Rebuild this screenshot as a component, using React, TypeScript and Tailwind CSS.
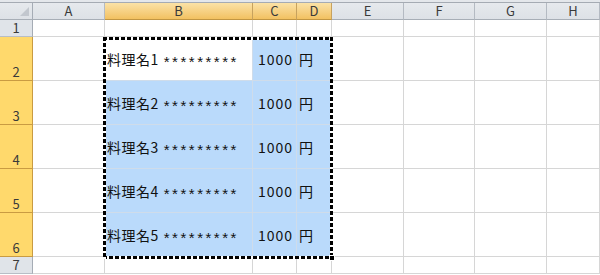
import React from 'react';

const COLS = ['A', 'B', 'C', 'D', 'E', 'F', 'G', 'H'];
const SEL_COLS = ['B', 'C', 'D'];
const ROWS = [1, 2, 3, 4, 5, 6, 7];
const SEL_ROWS = [2, 3, 4, 5, 6];

const FONT = "font-['Noto_Sans_CJK_JP','Noto_Sans',sans-serif]";

function ColHeader({ label }: { label: string }) {
  const sel = SEL_COLS.includes(label);
  return (
    <div
      className={
        'flex items-center justify-center text-[13px] text-[#3a3a3a] border-r border-b ' +
        (sel
          ? 'bg-linear-to-b from-[#fbe2a6] to-[#f2c160] border-r-[#c7a25e] border-b-[#c29642]'
          : 'bg-linear-to-b from-[#e6e9ed] to-[#dde1e6] border-r-[#b4bac2] border-b-[#a7aeb6]')
      }
    >
      {label}
    </div>
  );
}

function RowHeader({ n }: { n: number }) {
  const sel = SEL_ROWS.includes(n);
  return (
    <div
      className={
        'flex items-end justify-center text-[13px] leading-[13px] pb-[2px] text-[#3a3a3a] border-r border-b ' +
        (sel
          ? 'bg-[#ffd96c] border-r-[#c99b42] border-b-[#c99b42]'
          : 'bg-[#e0e4e9] border-r-[#a5acb5] border-b-[#b8bec6]')
      }
    >
      {n}
    </div>
  );
}

function Cell({ row, col }: { row: number; col: string }) {
  const inSel = SEL_ROWS.includes(row) && SEL_COLS.includes(col);
  const active = row === 2 && col === 'B';
  const bg = inSel && !active ? 'bg-[#badafb]' : 'bg-white';
  const border = inSel ? 'border-[#cfdcea]' : 'border-[#d6d6d6]';
  let content: React.ReactNode = null;
  if (inSel && col === 'B') {
    content = (
      <span className="flex items-center pl-[2px]">
        <span className="tracking-[0.5px]">{`料理名${row - 1}`}</span>
        <span className="ml-[5px] inline-block translate-y-[3px] text-[15px] tracking-[2.5px] font-['Liberation_Sans',sans-serif]">
          *********
        </span>
      </span>
    );
  } else if (inSel && col === 'C') {
    content = <span className="ml-auto pr-[3px] tracking-[1px]">1000</span>;
  } else if (inSel && col === 'D') {
    content = <span className="pl-[2px]">円</span>;
  }
  return (
    <div className={`flex items-center text-[14px] leading-[16px] text-[#111] whitespace-nowrap border-r border-b ${bg} ${border}`}>
      {content}
    </div>
  );
}

export default function App() {
  return (
    <div className={`relative w-[600px] h-[275px] overflow-hidden bg-white ${FONT}`}>
      <div className="h-[3px] bg-[#e4e7eb] border-b border-[#a5abb3]" />
      <div className="grid grid-cols-[33px_72px_148px_44px_35px_72px_71px_72px_1fr] grid-rows-[17px_17px_44px_44px_44px_44px_44px_17px]">
        <div className="relative bg-linear-to-b from-[#e6e9ed] to-[#dde1e6] border-r border-b border-r-[#a5acb5] border-b-[#a7aeb6]">
          <div className="absolute right-[3px] bottom-[3px] w-0 h-0 border-l-[9px] border-t-[9px] border-l-transparent border-t-transparent border-b-[9px] border-b-[#c2c7ce] border-r-0" />
        </div>
        {COLS.map(c => (
          <ColHeader key={c} label={c} />
        ))}
        {ROWS.map(r => (
          <React.Fragment key={r}>
            <RowHeader n={r} />
            {COLS.map(c => (
              <Cell key={c} row={r} col={c} />
            ))}
          </React.Fragment>
        ))}
      </div>

      {/* copy selection marquee */}
      <div className="absolute left-[103px] top-[37px] w-[230px] h-[222px] pointer-events-none">
        <div className="absolute left-0 right-0 top-0 h-[3px] bg-[repeating-linear-gradient(90deg,#000_0_4px,#fff_4px_6px)]" />
        <div className="absolute left-0 right-0 bottom-0 h-[3px] bg-[repeating-linear-gradient(90deg,#000_0_4px,#fff_4px_6px)]" />
        <div className="absolute top-0 bottom-0 left-0 w-[3px] bg-[repeating-linear-gradient(180deg,#000_0_4px,#fff_4px_6px)]" />
        <div className="absolute top-0 bottom-0 right-0 w-[3px] bg-[repeating-linear-gradient(180deg,#000_0_4px,#fff_4px_6px)]" />
        <div className="absolute right-[-2px] bottom-[-2px] w-[6px] h-[6px] bg-black border border-white" />
      </div>
    </div>
  );
}
